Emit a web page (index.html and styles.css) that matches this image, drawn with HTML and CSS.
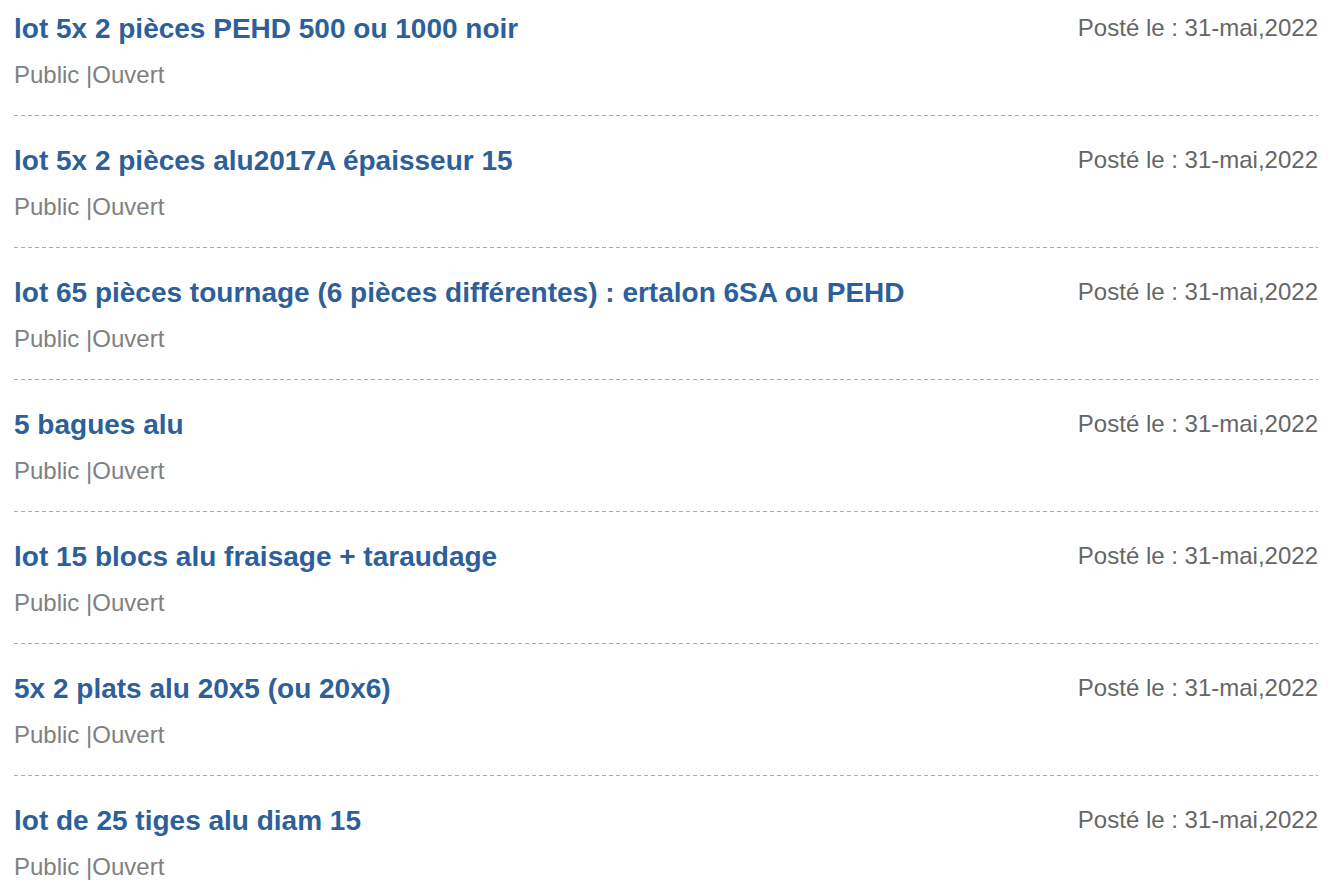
FILE: index.html
```html
<!DOCTYPE html>
<html lang="fr">
<head>
  <meta charset="UTF-8">
  <meta name="viewport" content="width=device-width, initial-scale=1.0">
  <title>Appels d'offres</title>
  <link rel="stylesheet" href="styles.css">
</head>
<body>
  <div class="offer-list">
    <div class="offer">
      <div class="offer-head">
        <a class="offer-title" href="#">lot 5x 2 pièces PEHD 500 ou 1000 noir</a>
        <span class="offer-date">Posté le : 31-mai,2022</span>
      </div>
      <p class="offer-meta">Public |Ouvert</p>
    </div>
    <div class="offer">
      <div class="offer-head">
        <a class="offer-title" href="#">lot 5x 2 pièces alu2017A épaisseur 15</a>
        <span class="offer-date">Posté le : 31-mai,2022</span>
      </div>
      <p class="offer-meta">Public |Ouvert</p>
    </div>
    <div class="offer">
      <div class="offer-head">
        <a class="offer-title" href="#">lot 65 pièces tournage (6 pièces différentes) : ertalon 6SA ou PEHD</a>
        <span class="offer-date">Posté le : 31-mai,2022</span>
      </div>
      <p class="offer-meta">Public |Ouvert</p>
    </div>
    <div class="offer">
      <div class="offer-head">
        <a class="offer-title" href="#">5 bagues alu</a>
        <span class="offer-date">Posté le : 31-mai,2022</span>
      </div>
      <p class="offer-meta">Public |Ouvert</p>
    </div>
    <div class="offer">
      <div class="offer-head">
        <a class="offer-title" href="#">lot 15 blocs alu fraisage + taraudage</a>
        <span class="offer-date">Posté le : 31-mai,2022</span>
      </div>
      <p class="offer-meta">Public |Ouvert</p>
    </div>
    <div class="offer">
      <div class="offer-head">
        <a class="offer-title" href="#">5x 2 plats alu 20x5 (ou 20x6)</a>
        <span class="offer-date">Posté le : 31-mai,2022</span>
      </div>
      <p class="offer-meta">Public |Ouvert</p>
    </div>
    <div class="offer">
      <div class="offer-head">
        <a class="offer-title" href="#">lot de 25 tiges alu diam 15</a>
        <span class="offer-date">Posté le : 31-mai,2022</span>
      </div>
      <p class="offer-meta">Public |Ouvert</p>
    </div>
  </div>
</body>
</html>
```

FILE: styles.css
```css
body {
  font-family: "Liberation Sans", Arial, sans-serif;
  background-color: #fff;
  margin: 0;
  padding: 0;
}
.offer-list {
  padding: 0 18px 0 14px;
}
.offer {
  padding: 28px 0 27px;
  background-image: repeating-linear-gradient(to right, #aaa 0 4px, transparent 4px 7px);
  background-size: 100% 1px;
  background-position: left bottom;
  background-repeat: no-repeat;
}
.offer:first-child {
  padding-top: 12px;
}
.offer:last-child {
  background-image: none;
}
.offer-head {
  display: flex;
  justify-content: space-between;
  align-items: flex-start;
}
.offer-title {
  font-size: 28px;
  line-height: 34px;
  font-weight: bold;
  color: #2d5f9a;
  text-decoration: none;
}
.offer-date {
  font-size: 24px;
  line-height: 32px;
  color: #666;
  white-space: nowrap;
}
.offer-meta {
  margin: 15px 0 0;
  font-size: 24px;
  line-height: 28px;
  color: #808080;
}
```
